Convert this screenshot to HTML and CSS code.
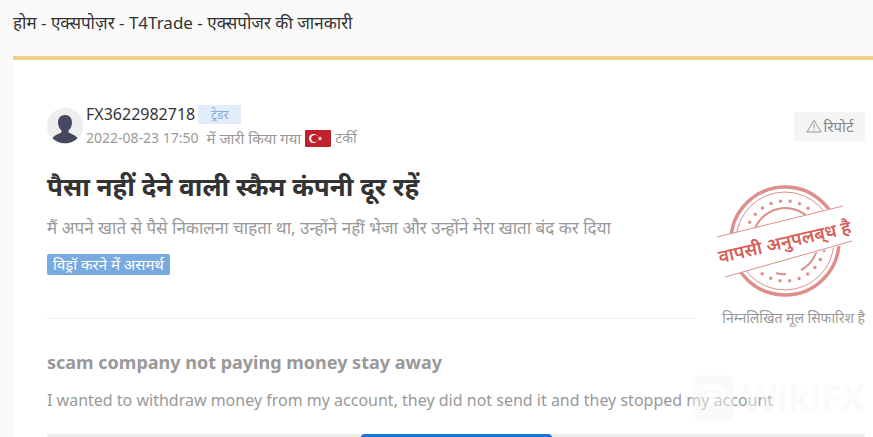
FILE: index.html
```html
<!DOCTYPE html>
<html lang="hi">
<head>
<meta charset="utf-8">
<meta name="viewport" content="width=device-width, initial-scale=1">
<title>T4Trade - एक्सपोजर की जानकारी</title>
<link rel="stylesheet" href="styles.css">
</head>
<body>
<nav class="crumbs">होम - एक्सपोज़र - T4Trade - एक्सपोजर की जानकारी</nav>
<main class="panel">
  <header class="author">
    <svg class="avatar" viewBox="0 0 36 36" aria-hidden="true">
      <circle cx="18" cy="18" r="18" fill="#eeeeef"/>
      <path d="M18 7c-4.300 0-7 3-7 7.500 0 3.500 1.500 6.500 3.500 8v1.500c-1 1.800-7 2.500-9 6.300A18 18 0 0 0 30.500 30.300c-2-3.800-8-4.500-9-6.300v-1.500c2-1.500 3.500-4.500 3.500-8C25 10 22.300 7 18 7z" fill="#454860"/>
    </svg>
    <div class="who">
      <div class="line"><span class="name">FX3622982718</span><span class="role">ट्रेडर</span></div>
      <div class="line meta"><time>2022-08-23 17:50</time><span class="issued">में जारी किया गया</span>
        <svg class="flag" viewBox="0 0 26 17" aria-hidden="true">
          <rect width="26" height="17" rx="1" fill="#c0202a"/>
          <circle cx="8.500" cy="8.500" r="4.500" fill="#fff"/>
          <circle cx="9.800" cy="8.500" r="3.600" fill="#c0202a"/>
          <path d="M15 6l.6 1.800 1.900-.1-1.500 1.100.6 1.900-1.600-1.100-1.600 1.100.6-1.900-1.500-1.100 1.900.1z" fill="#fff"/>
        </svg>
        <span>टर्की</span></div>
    </div>
    <button class="report" type="button">
      <svg viewBox="0 0 16 14" class="warn" aria-hidden="true"><path d="M8 1.500L15 13H1z M8 5v4.500 M8 10.500v1.200" fill="none" stroke="#999" stroke-linejoin="round"/></svg>रिपोर्ट</button>
  </header>
  <div class="summary">
    <section class="story">
      <h1>पैसा नहीं देने वाली स्कैम कंपनी दूर रहें</h1>
      <p class="text">मैं अपने खाते से पैसे निकालना चाहता था, उन्होंने नहीं भेजा और उन्होंने मेरा खाता बंद कर दिया</p>
      <span class="tag">विड्रॉ करने में असमर्थ</span>
    </section>
    <svg class="stamp" viewBox="0 0 150 120" role="img" aria-label="वापसी अनुपलब्ध है">
      <g fill="none" stroke="#dd8f8b">
        <circle cx="70" cy="61" r="54" stroke-width="3.500"/>
        <circle cx="70" cy="61" r="49" stroke-width="1"/>
        <circle cx="70" cy="61" r="40" stroke-width="3.500" stroke-linecap="round" stroke-dasharray="0 9.666"/>
        <path d="M39 51A33 33 0 0 1 94 38M102 70A33 33 0 0 1 86 90M61 93q5 2 10 1" stroke-width="2"/>
      </g>
      <path d="M2 57L137 23L143 61L10 97z" fill="#fff"/>
      <path d="M2 57L128 26M10 97L137 61" fill="none" stroke="#d9918d"/>
      <text class="stamp-text" x="71" y="68" text-anchor="middle" transform="rotate(-13 71 68)">वापसी अनुपलब्&zwnj;ध है</text>
    </svg>
    <hr class="rule">
    <p class="note">निम्नलिखित मूल सिफारिश है</p>
  </div>
  <section class="original" lang="en">
    <h2>scam company not paying money stay away</h2>
    <div class="quote">
      <p>I wanted to withdraw money from my account, they did not send it and they stopped my account</p>
      <div class="watermark" aria-hidden="true">
        <svg class="mark" viewBox="0 0 42 46"><rect width="42" height="46" rx="8" fill="#f7f7f7"/><path d="M11 12h14q7 0 7 7t-7 7H15v8M15 19h9" fill="none" stroke="#fff" stroke-width="4"/></svg>
        <span>WikiFX</span>
      </div>
    </div>
  </section>
  <div class="track"><div class="thumb"></div></div>
</main>
</body>
</html>
```
FILE: styles.css
```css
* { box-sizing: border-box; }
body {
  margin: 0;
  background: #fafafa;
  color: #333;
  font: 16px/24px "Noto Sans", "Open Sans", sans-serif;
}
h1, h2, p { margin: 0; }
.crumbs { padding: 11px 13px 21px; font-size: 17px; }
.panel {
  margin-left: 13px;
  padding: 42px 8px 0 34px;
  border-top: 4px solid #efcf88;
  background: #fff;
}
.author { display: flex; align-items: center; gap: 3px; height: 48px; }
.avatar { width: 36px; height: 36px; }
.who { flex: 1; }
.line { display: flex; align-items: center; height: 24px; white-space: nowrap; }
.name { font-size: 16px; }
.role {
  width: 43px;
  height: 19px;
  margin-left: 3px;
  background: #e3edf9;
  color: #82afdc;
  font-size: 12px;
  line-height: 19px;
  text-align: center;
}
.meta { color: #999; font-size: 14px; gap: 4px; }
.issued { margin-left: 4px; font-size: 15px; }
.flag { width: 26px; height: 17px; }
.report {
  display: flex;
  align-items: center;
  justify-content: center;
  width: 71px;
  height: 29px;
  padding: 0;
  border: 0;
  background: #f5f5f5;
  color: #888;
  font: inherit;
  font-size: 15px;
  gap: 2px;
}
.warn { width: 16px; height: 14px; }
.summary {
  display: grid;
  grid-template-columns: 1fr 150px;
  column-gap: 19px;
  align-items: center;
  padding-top: 20px;
}
.story { align-self: start; }
h1 { font-size: 26px; line-height: 32px; white-space: nowrap; }
.text { margin-top: 14px; color: #999; font-size: 17px; }
.tag {
  display: inline-block;
  height: 21px;
  margin-top: 14px;
  padding: 0 6px;
  border-radius: 2px;
  background: #78aae0;
  color: #fff;
  font-size: 15px;
  line-height: 20px;
}
.stamp { width: 150px; height: 120px; margin: 10px 0 6px; }
.stamp-text { fill: #d65f5a; font-size: 18px; font-weight: 600; }
.rule { width: 100%; height: 1px; margin: 0; border: 0; background: #eee; }
.note { color: #999; font-size: 14px; text-align: right; white-space: nowrap; }
.original { padding-top: 18px; color: #999; }
h2 { font-size: 18px; line-height: 28px; }
.quote { position: relative; padding: 12px 0 22px; }
.watermark {
  position: absolute;
  top: -1px;
  right: 0;
  display: flex;
  align-items: center;
  gap: 8px;
  color: #f7f7f7;
  font-size: 36px;
  font-weight: 700;
  line-height: 46px;
  opacity: 0.5;
}
.mark { width: 42px; height: 46px; }
.track { height: 4px; background: #eee; }
.thumb { width: 191px; max-width: 100%; height: 4px; margin: 0 auto; border-radius: 4px 4px 0 0; background: #1677d9; }
```
